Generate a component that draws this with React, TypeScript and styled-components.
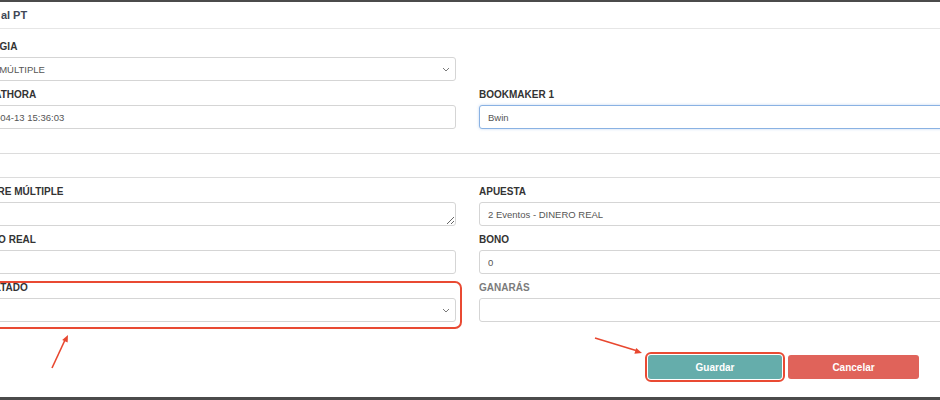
import styled, { createGlobalStyle } from "styled-components";

const GlobalStyle = createGlobalStyle`
  html, body {
    margin: 0;
    padding: 0;
  }
  body {
    background: #4b4b4b;
    font-family: "Liberation Sans", Arial, sans-serif;
    overflow: hidden;
  }
`;

const ChevronDown = () => (
  <svg width="8" height="5" viewBox="0 0 8 5">
    <path d="M1 1l3 3 3-3" fill="none" stroke="#7a7a7a" strokeWidth="1" />
  </svg>
);

const App = () => {
  return (
    <>
      <GlobalStyle />
      <Page>
        <Modal>
          <Header>
            <Title>Añadir al PT</Title>
          </Header>
          <Body>
            <Grid>
              <Group>
                <Label>TRATEGIA</Label>
                <SelectBox>
                  <span>UNA MÚLTIPLE</span>
                  <ChevronDown />
                </SelectBox>
              </Group>
              <div />
              <Group>
                <Label>FECHATHORA</Label>
                <Input readOnly value="2023-04-13 15:36:03" />
              </Group>
              <Group>
                <Label>BOOKMAKER 1</Label>
                <Input readOnly value="Bwin" $focused />
              </Group>
            </Grid>

            <Divider $gap={24} />
            <Divider $gap={23} />

            <Grid $top={8}>
              <Group>
                <Label>NOMBRE MÚLTIPLE</Label>
                <TextArea readOnly />
              </Group>
              <Group>
                <Label>APUESTA</Label>
                <Input readOnly value="2 Eventos - DINERO REAL" />
              </Group>
              <Group>
                <Label>DINERO REAL</Label>
                <Input readOnly value="" />
              </Group>
              <Group>
                <Label>BONO</Label>
                <Input readOnly value="0" />
              </Group>
              <Group $marked>
                <Label>RESULTADO</Label>
                <SelectBox>
                  <span />
                  <ChevronDown />
                </SelectBox>
              </Group>
              <Group>
                <Label $muted>GANARÁS</Label>
                <Input readOnly value="" />
              </Group>
            </Grid>

            <Footer>
              <ActionButton $bg="#65adab" $marked>
                Guardar
              </ActionButton>
              <ActionButton $bg="#e0635a">Cancelar</ActionButton>
            </Footer>
          </Body>
        </Modal>

        {/* annotation arrows drawn over the form */}
        <Arrows width="940" height="400" viewBox="0 0 940 400">
          <line x1="52" y1="368" x2="65" y2="340" stroke="#e8472f" strokeWidth="1.6" />
          <polygon points="68,335 67.6,342.6 62.2,340" fill="#e8472f" />
          <line x1="595" y1="338" x2="636" y2="350.6" stroke="#e8472f" strokeWidth="1.6" />
          <polygon points="642,353 634.4,353.7 636.2,347.9" fill="#e8472f" />
        </Arrows>
      </Page>
    </>
  );
};

export default App;

const Page = styled.div`
  position: relative;
  width: 940px;
  height: 400px;
  overflow: hidden;
  padding-top: 2px;
  box-sizing: border-box;
`;

const Modal = styled.div`
  background: #fff;
  margin-left: -48px;
  width: 1031px;
  height: 395px;
`;

const Header = styled.div`
  height: 27px;
  box-sizing: border-box;
  border-bottom: 1px solid #e6e6e6;
  padding: 0 15px;
  display: flex;
  align-items: center;
`;

const Title = styled.div`
  font-size: 11px;
  font-weight: 700;
  color: #404756;
  margin-left: -4px;
`;

const Body = styled.div`
  padding: 12px 15px 0;
`;

const Grid = styled.div<{ $top?: number }>`
  display: grid;
  grid-template-columns: 1fr 1fr;
  column-gap: 23px;
  row-gap: 8px;
  margin-top: ${({ $top }) => $top || 0}px;
`;

const Group = styled.div<{ $marked?: boolean }>`
  position: relative;

  ${({ $marked }) =>
    $marked &&
    `
    &::after {
      content: "";
      position: absolute;
      top: -1px;
      left: -40px;
      right: -6px;
      bottom: -7px;
      border: 2px solid #e94a33;
      border-radius: 7px;
      pointer-events: none;
    }
  `}
`;

const Label = styled.label<{ $muted?: boolean }>`
  display: block;
  font-size: 10px;
  font-weight: 700;
  line-height: 12px;
  margin-bottom: 4px;
  color: ${({ $muted }) => ($muted ? "#7b7b7b" : "#333")};
  white-space: nowrap;
`;

const fieldBase = `
  display: block;
  width: 100%;
  height: 24px;
  box-sizing: border-box;
  border: 1px solid #d5d5d5;
  border-radius: 3px;
  background: #fff;
  font-family: "Liberation Sans", Arial, sans-serif;
  font-size: 9.5px;
  color: #555;
  outline: none;
`;

const Input = styled.input<{ $focused?: boolean }>`
  ${fieldBase}
  padding: 0 8px;
  border-color: ${({ $focused }) => ($focused ? "#8ab2e3" : "#d5d5d5")};
  box-shadow: ${({ $focused }) =>
    $focused ? "0 0 3px rgba(102, 153, 220, 0.4)" : "none"};
`;

const TextArea = styled.textarea`
  ${fieldBase}
  padding: 6px 8px;
  resize: vertical;
`;

const SelectBox = styled.div`
  ${fieldBase}
  display: flex;
  align-items: center;
  justify-content: space-between;
  padding: 0 5px 0 9px;
`;

const Divider = styled.div<{ $gap: number }>`
  border-top: 1px solid #dcdcdc;
  margin-top: ${({ $gap }) => $gap}px;
`;

const Footer = styled.div`
  display: flex;
  justify-content: flex-end;
  gap: 6px;
  margin-top: 33px;
  padding-right: 49px;
`;

const ActionButton = styled.button<{ $bg: string; $marked?: boolean }>`
  width: 134px;
  height: 24px;
  border: none;
  border-radius: 3px;
  background: ${({ $bg }) => $bg};
  color: #fff;
  font-family: "Liberation Sans", Arial, sans-serif;
  font-size: 10px;
  font-weight: 700;
  cursor: pointer;
  outline: ${({ $marked }) => ($marked ? "2px solid #e94a33" : "none")};
  outline-offset: 1px;

  & + & {
    width: 131px;
  }
`;

const Arrows = styled.svg`
  position: absolute;
  top: 0;
  left: 0;
  pointer-events: none;
`;
